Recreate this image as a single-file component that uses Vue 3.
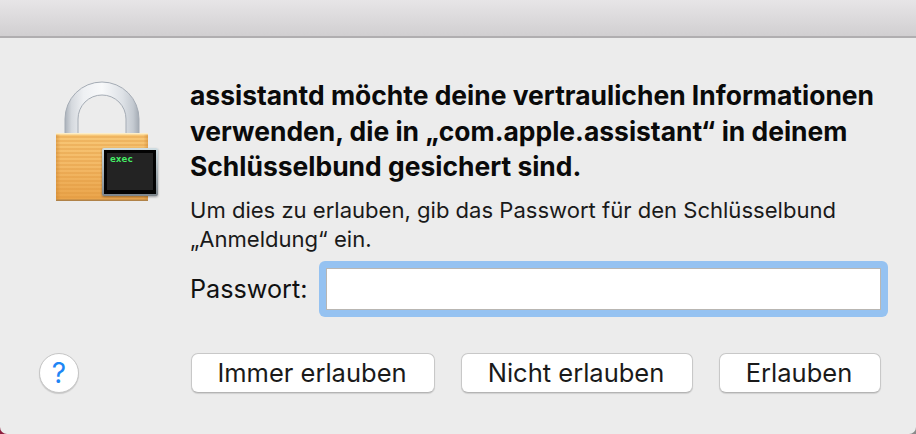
<script setup>
const buttons = [
  { label: 'Immer erlauben', width: 244 },
  { label: 'Nicht erlauben', width: 232 },
  { label: 'Erlauben', width: 162 },
]
</script>

<template>
  <div class="desktop">
    <div class="window">
      <div class="titlebar"></div>
      <div class="content">
        <div class="icon-col">
          <svg class="lock" width="112" height="122" viewBox="0 0 112 122">
            <defs>
              <linearGradient id="body" x1="0" y1="0" x2="0" y2="1">
                <stop offset="0" stop-color="#f8c877" />
                <stop offset="0.5" stop-color="#f3b865" />
                <stop offset="1" stop-color="#e9a349" />
              </linearGradient>
              <linearGradient id="side" x1="0" y1="0" x2="1" y2="0">
                <stop offset="0" stop-color="#c97f2a" stop-opacity="0.45" />
                <stop offset="0.05" stop-color="#c97f2a" stop-opacity="0" />
                <stop offset="0.95" stop-color="#c97f2a" stop-opacity="0" />
                <stop offset="1" stop-color="#c97f2a" stop-opacity="0.45" />
              </linearGradient>
              <linearGradient id="shackle" x1="0" y1="0" x2="1" y2="0">
                <stop offset="0" stop-color="#aab1ba" />
                <stop offset="0.09" stop-color="#d5d9de" />
                <stop offset="0.25" stop-color="#eef0f3" />
                <stop offset="0.5" stop-color="#f8f9fa" />
                <stop offset="0.78" stop-color="#dde1e6" />
                <stop offset="0.92" stop-color="#c4cad1" />
                <stop offset="1" stop-color="#a4abb4" />
              </linearGradient>
              <pattern id="ribs" width="4" height="4" patternUnits="userSpaceOnUse">
                <rect width="4" height="2" fill="#df9238" opacity="0.32" />
              </pattern>
              <linearGradient id="frame" x1="0" y1="0" x2="0" y2="1">
                <stop offset="0" stop-color="#cfdde2" />
                <stop offset="1" stop-color="#7d858b" />
              </linearGradient>
              <filter id="soft" x="-10%" y="-10%" width="120%" height="120%">
                <feDropShadow dx="0" dy="1" stdDeviation="1" flood-color="#000" flood-opacity="0.35" />
              </filter>
            </defs>
            <path d="M15 55V39A37 37 0 0 1 89 39V55H76V39A24 24 0 0 0 28 39V55Z" fill="url(#shackle)" stroke="#a5acb5" stroke-width="1" />
            <rect x="6" y="53" width="92" height="68" rx="2" fill="url(#body)" />
            <rect x="6" y="53" width="92" height="68" rx="2" fill="url(#ribs)" />
            <rect x="6" y="53" width="92" height="68" rx="2" fill="url(#side)" />
            <rect x="6" y="53" width="92" height="1.5" fill="#fdeec6" />
            <rect x="6" y="119.5" width="92" height="1.5" fill="#b08248" />
            <rect x="52" y="68" width="56" height="48" rx="2" fill="url(#frame)" filter="url(#soft)" />
            <rect x="54" y="70" width="52" height="44" fill="#030303" />
            <rect x="57" y="73" width="46" height="37" fill="#232323" />
            <text x="60" y="82" class="exec">exec</text>
          </svg>
        </div>
        <div class="main">
          <h1 class="title">assistantd möchte deine vertraulichen Informationen verwenden, die in „com.apple.assistant“ in deinem Schlüsselbund gesichert sind.</h1>
          <p class="desc">Um dies zu erlauben, gib das Passwort für den Schlüsselbund<br />„Anmeldung“ ein.</p>
          <div class="field">
            <label class="field-label" for="pw">Passwort:</label>
            <div class="ring"><input id="pw" class="input" type="password" /></div>
          </div>
        </div>
      </div>
      <div class="actions">
        <button class="help" type="button">?</button>
        <div class="buttons">
          <button v-for="b in buttons" :key="b.label" class="btn" type="button" :style="{ width: b.width + 'px' }">{{ b.label }}</button>
        </div>
      </div>
    </div>
  </div>
</template>

<style scoped>
.desktop {
  width: 916px;
  height: 434px;
  background: linear-gradient(90deg, #8d1f3e 50%, #8a8a8a 50%);
  overflow: hidden;
}
.window {
  width: 916px;
  height: 434px;
  background: #ececec;
  font-family: Inter, "Liberation Sans", Arial, sans-serif;
  color: #111;
  overflow: hidden;
  display: flex;
  flex-direction: column;
  border-radius: 0 0 7px 7px;
}
.titlebar {
  height: 36px;
  flex: none;
  background: linear-gradient(#e7e5e7, #d1cfd1);
  border-bottom: 2px solid #b0aeb0;
}
.content {
  display: flex;
  padding: 40px 28px 0 50px;
}
.icon-col {
  width: 140px;
  flex: none;
}
.lock {
  display: block;
  margin-top: 2px;
}
.exec {
  font-family: "DejaVu Sans Mono", monospace;
  font-size: 9.5px;
  font-weight: 700;
  fill: #45ef66;
}
.main {
  flex: 1;
  min-width: 0;
}
.title {
  margin: 0;
  font-size: 26.45px;
  line-height: 35.5px;
  font-weight: 700;
  color: #0a0a0a;
  width: 700px;
}
.desc {
  margin: 11px 0 0;
  font-size: 22.06px;
  line-height: 29px;
  color: #1a1a1a;
  white-space: nowrap;
}
.field {
  display: flex;
  align-items: center;
  gap: 12px;
  margin-top: 7px;
}
.field-label {
  font-size: 25.2px;
  color: #111;
  width: 117px;
  flex: none;
  white-space: nowrap;
}
.ring {
  padding: 7px;
  background: #95c2f1;
  border-radius: 6px;
  display: flex;
}
.input {
  box-sizing: border-box;
  display: block;
  width: 555px;
  height: 42px;
  background: #fff;
  border: 1px solid #b9b6b2;
  border-radius: 0;
  padding: 0;
  outline: none;
}
.actions {
  display: flex;
  align-items: center;
  justify-content: space-between;
  padding: 0 35px 0 39px;
  margin-top: 36px;
}
.help {
  box-sizing: border-box;
  width: 40px;
  height: 40px;
  border-radius: 50%;
  border: 1px solid #c6c6c6;
  background: #fff;
  box-shadow: 0 1px 1px rgba(0, 0, 0, 0.15);
  color: #1e86f5;
  font-family: Inter, "Liberation Sans", Arial, sans-serif;
  font-size: 28px;
  font-weight: 400;
  line-height: 1;
  padding: 0;
}
.buttons {
  display: flex;
  gap: 26px;
}
.btn {
  box-sizing: border-box;
  height: 40px;
  border-radius: 7px;
  border: 1px solid #c8c8c8;
  border-bottom-color: #b4b4b4;
  background: #fff;
  box-shadow: 0 1px 1px rgba(0, 0, 0, 0.12);
  font-family: Inter, "Liberation Sans", Arial, sans-serif;
  font-size: 25.5px;
  color: #1a1a1a;
  padding: 0 2px 0 0;
}
</style>
